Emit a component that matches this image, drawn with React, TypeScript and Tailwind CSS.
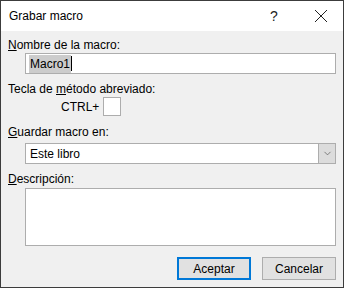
import { ChevronDown } from 'lucide-react';

export default function App() {
  return (
    <div
      className="w-[344px] h-[288px] bg-[#f0f0f0] border border-[#3c3c3c] flex flex-col text-[12px] text-[#000] leading-[14px]"
      style={{ fontFamily: '"Liberation Sans", Arial, sans-serif' }}
    >
      {/* Barra de título */}
      <div className="h-[30px] bg-white flex items-center pl-[8px] shrink-0">
        <span className="flex-1">Grabar macro</span>
        <span className="w-[12px] mr-[34px] text-[14px] text-center text-[#222]">?</span>
        <svg width="14" height="14" viewBox="0 0 14 14" className="mr-[15px]">
          <path d="M1 1 L13 13 M13 1 L1 13" stroke="#222" strokeWidth="1" />
        </svg>
      </div>

      {/* Cuerpo */}
      <div className="flex flex-col px-[7px] pt-[7px]">
        <span>
          <u>N</u>ombre de la macro:
        </span>
        <div className="ml-[17px] mt-[1px] h-[21px] bg-white border border-[#adadad] flex items-center pl-[3px]">
          <span className="bg-[#cccccc] px-[1px] py-[2px] leading-[14px]">Macro1</span>
          <span className="w-px h-[15px] bg-black" />
        </div>

        <span className="mt-[8px]">
          Tecla de <u>m</u>étodo abreviado:
        </span>
        <div className="flex items-center mt-[1px] ml-[53px] gap-[4px]">
          <span>CTRL+</span>
          <div className="w-[18px] h-[19px] bg-white border border-[#adadad]" />
        </div>

        <span className="mt-[9px]">
          <u>G</u>uardar macro en:
        </span>
        <div className="ml-[17px] mt-[4px] h-[21px] bg-white border border-[#adadad] flex items-center">
          <span className="flex-1 pl-[4px]">Este libro</span>
          <div className="w-[17px] h-full bg-[#dcdcdc] border-l border-[#adadad] flex items-center justify-center">
            <ChevronDown size={11} strokeWidth={1.5} color="#555" />
          </div>
        </div>

        <span className="mt-[8px]">
          <u>D</u>escripción:
        </span>
        <div className="ml-[17px] mt-[2px] h-[58px] bg-white border border-[#adadad]" />

        <div className="flex justify-end gap-[11px] mt-[11px]">
          <button className="w-[74px] h-[23px] bg-[#e1e1e1] border-2 border-[#0078d7]">
            Aceptar
          </button>
          <button className="w-[74px] h-[23px] bg-[#e1e1e1] border border-[#adadad]">
            Cancelar
          </button>
        </div>
      </div>
    </div>
  );
}
